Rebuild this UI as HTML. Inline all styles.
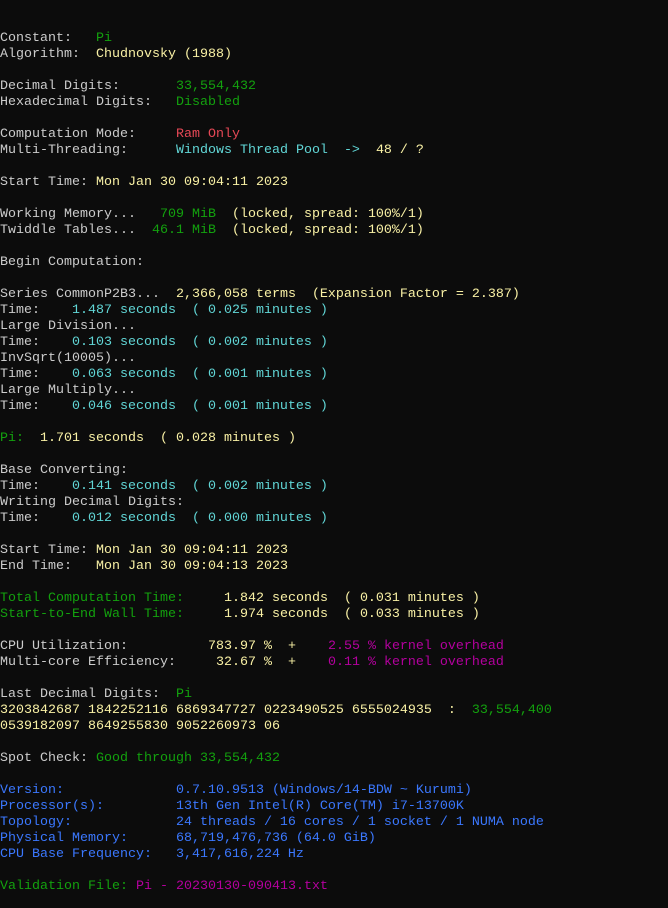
<!DOCTYPE html>
<html><head><meta charset="utf-8"><style>
html,body{margin:0;padding:0;background:#0c0c0c;width:668px;height:908px;overflow:hidden}
pre{margin:0;padding:31px 0 0 0;font-family:"Liberation Mono",monospace;font-size:13.33px;line-height:16px;color:#cccccc;white-space:pre}
.g{color:#13a10e}.r{color:#e74856}.c{color:#61d6d6}.y{color:#f9f1a5}.m{color:#b4009e}.b{color:#3b78ff}
</style></head><body><pre>Constant:   <span class="g">Pi</span>
Algorithm:  <span class="y">Chudnovsky (1988)</span>

Decimal Digits:       <span class="g">33,554,432</span>
Hexadecimal Digits:   <span class="g">Disabled</span>

Computation Mode:     <span class="r">Ram Only</span>
Multi-Threading:      <span class="c">Windows Thread Pool</span>  <span class="c">-&gt;</span>  <span class="y">48 / ?</span>

Start Time: <span class="y">Mon Jan 30 09:04:11 2023</span>

Working Memory...   <span class="g">709 MiB</span>  <span class="y">(locked, spread: 100%/1)</span>
Twiddle Tables...  <span class="g">46.1 MiB</span>  <span class="y">(locked, spread: 100%/1)</span>

Begin Computation:

Series CommonP2B3...  <span class="y">2,366,058 terms  (Expansion Factor = 2.387)</span>
Time:    <span class="c">1.487 seconds  ( 0.025 minutes )</span>
Large Division...
Time:    <span class="c">0.103 seconds  ( 0.002 minutes )</span>
InvSqrt(10005)...
Time:    <span class="c">0.063 seconds  ( 0.001 minutes )</span>
Large Multiply...
Time:    <span class="c">0.046 seconds  ( 0.001 minutes )</span>

<span class="g">Pi:</span>  <span class="y">1.701 seconds  ( 0.028 minutes )</span>

Base Converting:
Time:    <span class="c">0.141 seconds  ( 0.002 minutes )</span>
Writing Decimal Digits:
Time:    <span class="c">0.012 seconds  ( 0.000 minutes )</span>

Start Time: <span class="y">Mon Jan 30 09:04:11 2023</span>
End Time:   <span class="y">Mon Jan 30 09:04:13 2023</span>

<span class="g">Total Computation Time:</span>     <span class="y">1.842 seconds  ( 0.031 minutes )</span>
<span class="g">Start-to-End Wall Time:</span>     <span class="y">1.974 seconds  ( 0.033 minutes )</span>

CPU Utilization:          <span class="y">783.97 %</span>  <span class="y">+</span>    <span class="m">2.55 % kernel overhead</span>
Multi-core Efficiency:     <span class="y">32.67 %</span>  <span class="y">+</span>    <span class="m">0.11 % kernel overhead</span>

Last Decimal Digits:  <span class="g">Pi</span>
<span class="y">3203842687 1842252116 6869347727 0223490525 6555024935  :</span>  <span class="g">33,554,400</span>
<span class="y">0539182097 8649255830 9052260973 06</span>

Spot Check: <span class="g">Good through 33,554,432</span>

<span class="b">Version:              0.7.10.9513 (Windows/14-BDW ~ Kurumi)</span>
<span class="b">Processor(s):         13th Gen Intel(R) Core(TM) i7-13700K</span>
<span class="b">Topology:             24 threads / 16 cores / 1 socket / 1 NUMA node</span>
<span class="b">Physical Memory:      68,719,476,736 (64.0 GiB)</span>
<span class="b">CPU Base Frequency:   3,417,616,224 Hz</span>

<span class="g">Validation File:</span> <span class="m">Pi - 20230130-090413.txt</span>
</pre></body></html>
